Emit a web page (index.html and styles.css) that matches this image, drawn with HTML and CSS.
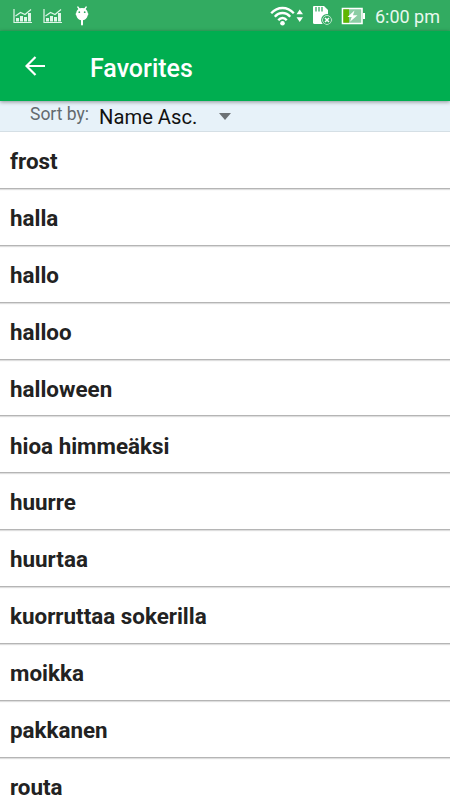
FILE: index.html
```html
<!DOCTYPE html>
<html lang="en">
<head>
    <meta charset="UTF-8">
    <meta name="viewport" content="width=device-width, initial-scale=1.0">
    <title>Favorites</title>
    <link rel="stylesheet" href="styles.css">
</head>
<body>
    <div class="status-bar">
        <svg class="chart-icon" width="20" height="16" viewBox="0 0 20 16">
            <path d="M1 1v13.5h18" fill="none" stroke="#dff5e8" stroke-width="1.200"/>
            <path d="M3 10h3v3.500H3zM7 8h3v5.500H7zM11 9h3v4.500h-3zM15 5h3v8.500h-3z" fill="#dff5e8"/>
            <path d="M2.500 8l5-3.500 4.500 2 6-5" fill="none" stroke="#dff5e8" stroke-width="1.200"/>
        </svg>
        <svg class="chart-icon" width="20" height="16" viewBox="0 0 20 16">
            <path d="M1 1v13.5h18" fill="none" stroke="#dff5e8" stroke-width="1.200"/>
            <path d="M3 10h3v3.500H3zM7 8h3v5.500H7zM11 9h3v4.500h-3zM15 5h3v8.500h-3z" fill="#dff5e8"/>
            <path d="M2.500 8l5-3.500 4.500 2 6-5" fill="none" stroke="#dff5e8" stroke-width="1.200"/>
        </svg>
        <svg class="debug-icon" width="14" height="20" viewBox="0 0 14 20">
            <path d="M2.800 1l1.800 2.500M11.200 1L9.400 3.500" stroke="#fff" stroke-width="1.300" stroke-linecap="round"/>
            <path d="M7 13v5.500" stroke="#fff" stroke-width="2" stroke-linecap="round"/>
            <path d="M7 2C3.500 2 1.500 4 1.200 7L.5 8l.8 1.500C2 12.500 4 14.300 7 14.300s5-1.800 5.700-4.800l.8-1.500-.7-1C12.500 4 10.500 2 7 2z" fill="#fff"/>
            <circle cx="4.300" cy="6.200" r=".9" fill="#32ab61"/>
            <circle cx="9.700" cy="6.200" r=".9" fill="#32ab61"/>
        </svg>
        <div class="status-right">
            <svg class="wifi-icon" width="34" height="20" viewBox="0 0 34 20">
                <path d="M1.200 7.200Q6 2 12.500 2T23.800 7.200M4.800 10.800Q8 7 12.500 7T20.200 10.800M8.300 14.300Q10 12 12.500 12T16.700 14.300" fill="none" stroke="#fff" stroke-width="2.300"/>
                <circle cx="12.500" cy="17.200" r="2.300" fill="#fff"/>
                <path d="M26.500 8.200L29.700 3.500 33 8.200zM26.500 11.300l3.200 4.700 3.300-4.700z" fill="#fff"/>
            </svg>
            <svg class="sd-icon" width="21" height="21" viewBox="0 0 21 21">
                <path d="M1.500 1H12l4 4v14H2.500Q1 19 1 17.500v-16z" fill="#fff"/>
                <path d="M4 2v4.500M7 2v4.500M10 2v4.500" stroke="#32ab61" stroke-width="1.300"/>
                <circle cx="15" cy="15" r="5.300" fill="#fff" stroke="#32ab61" stroke-width="1.200"/>
                <circle cx="15" cy="15" r="4" fill="#32ab61"/>
                <path d="M13 13l4 4M17 13l-4 4" stroke="#fff" stroke-width="1.500"/>
            </svg>
            <svg class="battery-icon" width="25" height="18" viewBox="0 0 25 18">
                <path d="M1.500 1.500h19.500v15H1.500z" fill="#8bcda4" stroke="#fff" stroke-width="1.600"/>
                <path d="M2.300 2.300H8v13.400H2.300z" fill="#60b500"/>
                <path d="M22 6h2v6h-2z" fill="#fff"/>
                <path d="M13.500 3.500L6.500 10h4.200L9 14.800l7.500-6.600H12z" fill="#fff"/>
            </svg>
            <span class="clock">6:00 pm</span>
        </div>
    </div>

    <div class="app-bar">
        <svg class="back-icon" width="20" height="20" viewBox="0 0 20 20">
            <path d="M20 10H2M10.500 1L1.500 10l9 9" fill="none" stroke="#fff" stroke-width="2.200"/>
        </svg>
        <h1>Favorites</h1>
    </div>

    <div class="sort-bar">
        <span class="sort-label">Sort by:</span>
        <span class="sort-value">Name Asc.</span>
        <svg class="arrow-icon" width="12" height="7" viewBox="0 0 12 7">
            <path d="M0 0h12L6 7z" fill="#6c7275"/>
        </svg>
    </div>

    <ul class="word-list">
        <li>frost</li>
        <li>halla</li>
        <li>hallo</li>
        <li>halloo</li>
        <li>halloween</li>
        <li>hioa himmeäksi</li>
        <li>huurre</li>
        <li>huurtaa</li>
        <li>kuorruttaa sokerilla</li>
        <li>moikka</li>
        <li>pakkanen</li>
        <li>routa</li>
    </ul>
</body>
</html>
```
FILE: styles.css
```css
* {
    box-sizing: border-box;
}
body {
    margin: 0;
    height: 800px;
    overflow: hidden;
    display: flex;
    flex-direction: column;
    font-family: Roboto, sans-serif;
    background-color: #fff;
}
svg {
    display: block;
    flex: none;
}
.status-bar {
    flex: none;
    height: 31px;
    display: flex;
    align-items: flex-start;
    padding: 0 10px 0 13px;
    background-color: #32ab61;
}
.chart-icon {
    margin: 8px 10px 0 0;
}
.debug-icon {
    margin: 6px 0 0 2px;
}
.status-right {
    display: flex;
    margin-left: auto;
}
.wifi-icon {
    margin: 6px 8px 0 0;
}
.sd-icon {
    margin: 5px 8px 0 0;
}
.battery-icon {
    margin: 7px 9px 0 0;
}
.clock {
    font-size: 18px;
    line-height: 33px;
    color: #e8f8ee;
    white-space: nowrap;
}
.app-bar {
    flex: none;
    height: 70px;
    display: flex;
    align-items: center;
    padding-left: 25px;
    background-color: #00ae50;
    box-shadow: 0 1px 4px rgba(0,0,0,0.4);
    z-index: 1;
}
h1 {
    margin: 5px 0 0 45px;
    font-size: 25px;
    font-weight: 500;
    line-height: 30px;
    color: #fff;
}
.sort-bar {
    flex: none;
    height: 31px;
    display: flex;
    align-items: flex-start;
    padding-left: 30px;
    background-color: #e7f2f9;
    border-bottom: 1px solid #d5dfe5;
}
.sort-label {
    margin-top: 2px;
    font-size: 17.5px;
    line-height: 22px;
    color: #636a6e;
}
.sort-value {
    margin: 4px 0 0 10px;
    font-size: 20.2px;
    line-height: 24px;
    color: #111;
}
.arrow-icon {
    margin: 12px 0 0 22px;
}
.word-list {
    margin: 0;
    padding: 0;
    list-style: none;
}
.word-list li {
    height: 56.88px;
    padding: 15.2px 10px 0;
    font-size: 22.4px;
    font-weight: 700;
    line-height: 28px;
    color: #222;
    border-bottom: 1px solid #b5b5b5;
    box-shadow: 0 1px 1px rgba(0,0,0,0.13);
}
```
